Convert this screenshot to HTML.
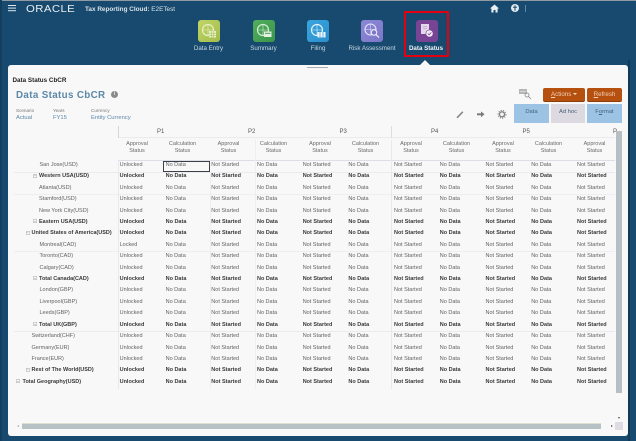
<!DOCTYPE html>
<html><head><meta charset="utf-8"><style>
html,body{margin:0;padding:0}
body{width:636px;height:441px;overflow:hidden;background:#174a6e;font-family:"Liberation Sans",sans-serif;position:relative;color:#444}
#w{position:absolute;left:0;top:0;width:636px;height:441px;filter:blur(.38px)}
.a{position:absolute;white-space:nowrap}
.tile{position:absolute;top:20px;width:22px;height:22px;border-radius:3px}
.lb{position:absolute;top:45px;font-size:6.2px;line-height:8px;color:#c9d7e2;text-align:center;width:70px;font-weight:400}
.grid{position:absolute;left:0;top:160px;width:620px}
.r{position:relative;height:11.42px;line-height:11.42px;font-size:5.5px;color:#626262;white-space:nowrap}
.r span{position:absolute;top:0}
.r span:nth-child(2){left:119.6px}.r span:nth-child(3){left:165.6px}.r span:nth-child(4){left:211.3px}.r span:nth-child(5){left:257px}.r span:nth-child(6){left:302.7px}.r span:nth-child(7){left:348.4px}.r span:nth-child(8){left:394px}.r span:nth-child(9){left:439.8px}.r span:nth-child(10){left:485.5px}.r span:nth-child(11){left:531.2px}.r span:nth-child(12){left:577px}
.r b{position:absolute;top:0;font-weight:400}
.t{color:#3a3a3a;font-weight:700}.t b{font-weight:700;color:#3a3a3a}
.t::before{content:"";position:absolute;left:var(--i);top:2.2px;width:4px;height:4px;box-sizing:border-box;box-shadow:inset 0 0 0 .7px #c2c2c2;background:linear-gradient(#c2c2c2,#c2c2c2) center/2.4px .7px no-repeat}
.hd{position:absolute;font-size:5.5px;line-height:7.3px;text-align:center;width:44px;color:#6a6a6a;top:140.6px}
.p{position:absolute;top:128px;font-size:6px;color:#555;line-height:8px}
.hl{position:absolute;height:1px;background:#eaeaef}
.vl{position:absolute;width:1px;background:#e9e9ed}
.btn{position:absolute;top:88px;height:13.5px;background:#b5500f;border-radius:2px;color:#f3d3bb;font-size:6.2px;line-height:13px;text-align:center;border-bottom:1px solid #8a3c0a;box-sizing:border-box}
.tab{position:absolute;top:104px;height:19px;font-size:5.8px;line-height:17.5px;text-align:center;color:#45617a}
</style></head><body><div id="w">
<div class="a" style="left:0;top:0;width:636px;height:1px;background:#8f9aa3"></div>
<div class="a" style="left:8px;top:5px;width:8px;height:1.4px;background:#dfe6ec;box-shadow:0 2.6px 0 #dfe6ec,0 5.2px 0 #dfe6ec"></div>
<div class="a" style="left:26px;top:3.5px;font-size:9.8px;line-height:11px;letter-spacing:.35px;color:#e9eef2;transform:scaleX(1.16);transform-origin:left">ORACLE</div>
<div class="a" style="left:85px;top:5px;font-size:6.4px;line-height:9px;color:#d9e2e9"><strong>Tax Reporting Cloud:</strong> E2ETest</div>
<svg class="a" style="left:489px;top:3px" width="40" height="11" viewBox="0 0 40 11"><path d="M1 5.5 5.5 1.5 10 5.5H8.6V9.5H6.5V7H4.5V9.5H2.4V5.5Z" fill="#e8eef2"/><circle cx="26" cy="5" r="4" fill="#e0e7ec"/><path d="M26 2.2v5.6M24 4.2h4" stroke="#174a6e" stroke-width="1"/><path d="M36.5 2v7" stroke="#7f99ad" stroke-width=".8"/></svg>

<div class="tile" style="left:198px;background:linear-gradient(135deg,#c0d667,#a3bc4a)"></div>
<svg class="a" style="left:198px;top:20px" width="22" height="22" viewBox="0 0 22 22"><circle cx="10" cy="10" r="5.5" fill="none" stroke="#e8efc8" stroke-width="1.2"/><path d="M4.5 10h11M10 4.5v11" stroke="#e8efc8" stroke-width=".6"/><rect x="11" y="11" width="7" height="6.5" fill="#e8efc8"/><path d="M11 13.2h7M11 15.3h7M13.3 11v6.5M15.6 11v6.5" stroke="#a3bc4a" stroke-width=".5"/></svg>
<div class="tile" style="left:252.5px;background:linear-gradient(135deg,#52ad5c,#3a964a)"></div>
<svg class="a" style="left:252.5px;top:20px" width="22" height="22" viewBox="0 0 22 22"><circle cx="10" cy="10" r="5.5" fill="none" stroke="#d5ecd6" stroke-width="1.2"/><path d="M4.5 10h11M10 4.5v11" stroke="#d5ecd6" stroke-width=".6"/><rect x="11" y="11.5" width="7.5" height="5.5" fill="#e3f2e3"/><path d="M12 13.3h5.5" stroke="#3a964a" stroke-width=".9"/></svg>
<div class="tile" style="left:307px;background:linear-gradient(135deg,#3aa5df,#2a8fcc)"></div>
<svg class="a" style="left:307px;top:20px" width="22" height="22" viewBox="0 0 22 22"><circle cx="10" cy="10" r="5.5" fill="none" stroke="#e2f2fb" stroke-width="1.2"/><path d="M4.5 10h11M10 4.5v11" stroke="#e2f2fb" stroke-width=".6"/><rect x="10.5" y="12" width="8" height="5.5" fill="#e8f5fc"/><path d="M13 12v5.5M16 12v5.5" stroke="#2a8fcc" stroke-width=".6"/></svg>
<div class="tile" style="left:361px;background:linear-gradient(135deg,#8d88d6,#7b76c7)"></div>
<svg class="a" style="left:361px;top:20px" width="22" height="22" viewBox="0 0 22 22"><circle cx="9.5" cy="9.5" r="5.5" fill="none" stroke="#e6e4f6" stroke-width="1.1"/><path d="M4 9.5h11M9.5 4v11" stroke="#e6e4f6" stroke-width=".5"/><circle cx="13" cy="12.5" r="2.7" fill="#7b76c7" stroke="#f2f1fb" stroke-width="1"/><path d="M15 14.6 18 17.5" stroke="#f2f1fb" stroke-width="1.2"/></svg>
<div class="tile" style="left:416px;background:#7a4496"></div>
<svg class="a" style="left:416px;top:20px" width="22" height="22" viewBox="0 0 22 22"><path d="M5 4h8v5.5l-1 4.5H5Z" fill="#e3d8ea"/><path d="M7 6.5h4M7 8.5h4" stroke="#a88abb" stroke-width=".5"/><circle cx="13.5" cy="13.5" r="3.6" fill="#f3eef6" stroke="#7a4496" stroke-width=".6"/><path d="M11.8 13.5 13.1 14.8 15.3 12.4" fill="none" stroke="#7a4496" stroke-width=".8"/></svg>
<div class="lb" style="left:173.5px">Data Entry</div>
<div class="lb" style="left:228.5px">Summary</div>
<div class="lb" style="left:283px">Filing</div>
<div class="lb" style="left:337px">Risk Assessment</div>
<div class="lb" style="left:391px;color:#f2f5f8;font-weight:700">Data Status</div>
<div class="a" style="left:404px;top:11px;width:45px;height:46px;box-sizing:border-box;border:2px solid #e4000f"></div>

<div class="a" style="left:7.5px;top:65px;width:620.5px;height:371px;background:#f8f8f8;border-radius:3px"></div>
<div class="a" style="left:420px;top:60px;width:0;height:0;border-left:5.5px solid transparent;border-right:5.5px solid transparent;border-bottom:5.5px solid #f8f8f8"></div>
<div class="a" style="left:307px;top:66.5px;width:21px;height:1px;background:#a8adb2"></div>
<div class="a" style="left:628px;top:60px;width:2px;height:381px;background:#0f3a5a"></div>
<div class="a" style="left:0;top:0;width:2px;height:441px;background:#123f60"></div>

<div class="a" style="left:12.5px;top:76.5px;font-size:6.3px;line-height:8px;font-weight:700;color:#222">Data Status CbCR</div>
<div class="a" style="left:16px;top:89px;font-size:9.8px;line-height:13px;font-weight:700;color:#5b87a8;letter-spacing:.35px">Data Status CbCR</div>
<div class="a" style="left:111px;top:91px;width:7px;height:7px;border-radius:50%;background:#8a8a8a;color:#eee;font-size:5px;line-height:7px;text-align:center;font-weight:700">i</div>
<div class="a" style="left:16px;top:107px;font-size:4.6px;line-height:7px;color:#777">Scenario</div>
<div class="a" style="left:16px;top:113.6px;font-size:5.8px;line-height:8px;color:#5b87a8">Actual</div>
<div class="a" style="left:53px;top:107px;font-size:4.6px;line-height:7px;color:#777">Years</div>
<div class="a" style="left:53px;top:113.6px;font-size:5.8px;line-height:8px;color:#5b87a8">FY15</div>
<div class="a" style="left:91px;top:107px;font-size:4.6px;line-height:7px;color:#777">Currency</div>
<div class="a" style="left:91px;top:113.6px;font-size:5.8px;line-height:8px;color:#5b87a8">Entity Currency</div>

<svg class="a" style="left:518px;top:88px" width="14" height="12" viewBox="0 0 14 12"><rect x="1" y="1" width="8" height="5" fill="#b5b5b5"/><path d="M2 3.5h6" stroke="#eee" stroke-width=".6"/><circle cx="9" cy="7" r="2" fill="none" stroke="#888" stroke-width=".8"/><path d="M10.5 8.5 13 11" stroke="#888" stroke-width=".8"/></svg>
<div class="btn" style="left:543px;width:42px"><u>A</u>ctions <span style="display:inline-block;border-left:2.2px solid transparent;border-right:2.2px solid transparent;border-top:2.4px solid #f3e3d6;vertical-align:1px"></span></div>
<div class="btn" style="left:587px;width:35px"><u>R</u>efresh</div>
<svg class="a" style="left:455px;top:108px" width="56" height="12" viewBox="0 0 56 12"><path d="M2 9.8 7.8 3.8" stroke="#858585" stroke-width="1.5"/><path d="M22 6.3h4.5" stroke="#7a7a7a" stroke-width="2"/><path d="M26 3.4 29.5 6.3 26 9.2Z" fill="#7a7a7a"/><circle cx="47" cy="6.3" r="2.5" fill="none" stroke="#7f7f7f" stroke-width="1.3"/><circle cx="47" cy="6.3" r="3.9" fill="none" stroke="#7f7f7f" stroke-width="1" stroke-dasharray="1.2 1.2"/></svg>
<div class="tab" style="left:514px;width:35px;background:#9cc3e4">Data</div>
<div class="tab" style="left:551px;width:34px;background:#dcd9e0">Ad hoc</div>
<div class="tab" style="left:587px;width:35px;background:#9cc3e4">F<u>o</u>rmat</div>

<div class="p" style="left:157px">P1</div><div class="p" style="left:248px">P2</div><div class="p" style="left:339.5px">P3</div><div class="p" style="left:431px">P4</div><div class="p" style="left:522.5px">P5</div><div class="p" style="left:613px">P</div>
<div class="hl" style="left:118px;top:137px;width:497px"></div>
<div class="vl" style="left:117.5px;top:126px;height:12px;background:#d5d5da"></div>
<div class="vl" style="left:391px;top:126px;height:12px;background:#ddd"></div>
<div class="hd" style="left:115px">Approval<br>Status</div><div class="hd" style="left:160.5px">Calculation<br>Status</div>
<div class="hd" style="left:206.5px">Approval<br>Status</div><div class="hd" style="left:251.5px">Calculation<br>Status</div>
<div class="hd" style="left:298px">Approval<br>Status</div><div class="hd" style="left:343.5px">Calculation<br>Status</div>
<div class="hd" style="left:389px">Approval<br>Status</div><div class="hd" style="left:434.5px">Calculation<br>Status</div>
<div class="hd" style="left:481px">Approval<br>Status</div><div class="hd" style="left:526.5px">Calculation<br>Status</div>
<div class="hd" style="left:572.5px">Approval<br>Status</div>
<div class="hl" style="left:118px;top:159.5px;width:497px;background:#dedee8"></div>
<div class="hl" style="left:14px;top:171.5px;width:601px"></div>
<div class="hl" style="left:14px;top:194px;width:601px;background:#eeeef2"></div>
<div class="hl" style="left:14px;top:251px;width:601px;background:#eeeef2"></div>
<div class="hl" style="left:14px;top:331px;width:601px"></div>
<div class="vl" style="left:117.5px;top:160px;height:229px"></div>
<div class="vl" style="left:209.5px;top:172px;height:217px;background:#eeeef0"></div>
<div class="vl" style="left:254.5px;top:140px;height:249px;background:#eeeef0"></div>
<div class="vl" style="left:391px;top:140px;height:249px"></div>
<div class="a" style="left:163px;top:160.5px;width:46.5px;height:11.5px;box-sizing:border-box;border:1px solid #3c4146"></div>

<div class="grid">
<div class="r"><b style="left:39.5px">San Jose(USD)</b><span>Unlocked</span><span>No Data</span><span>Not Started</span><span>No Data</span><span>Not Started</span><span>No Data</span><span>Not Started</span><span>No Data</span><span>Not Started</span><span>No Data</span><span>Not Started</span></div>
<div class="r t" style="--i:33px"><b style="left:39px">Western USA(USD)</b><span>Unlocked</span><span>No Data</span><span>Not Started</span><span>No Data</span><span>Not Started</span><span>No Data</span><span>Not Started</span><span>No Data</span><span>Not Started</span><span>No Data</span><span>Not Started</span></div>
<div class="r"><b style="left:39px">Atlanta(USD)</b><span>Unlocked</span><span>No Data</span><span>Not Started</span><span>No Data</span><span>Not Started</span><span>No Data</span><span>Not Started</span><span>No Data</span><span>Not Started</span><span>No Data</span><span>Not Started</span></div>
<div class="r"><b style="left:39px">Stamford(USD)</b><span>Unlocked</span><span>No Data</span><span>Not Started</span><span>No Data</span><span>Not Started</span><span>No Data</span><span>Not Started</span><span>No Data</span><span>Not Started</span><span>No Data</span><span>Not Started</span></div>
<div class="r"><b style="left:39px">New York City(USD)</b><span>Unlocked</span><span>No Data</span><span>Not Started</span><span>No Data</span><span>Not Started</span><span>No Data</span><span>Not Started</span><span>No Data</span><span>Not Started</span><span>No Data</span><span>Not Started</span></div>
<div class="r t" style="--i:33px"><b style="left:39px">Eastern USA(USD)</b><span>Unlocked</span><span>No Data</span><span>Not Started</span><span>No Data</span><span>Not Started</span><span>No Data</span><span>Not Started</span><span>No Data</span><span>Not Started</span><span>No Data</span><span>Not Started</span></div>
<div class="r t" style="--i:25.5px"><b style="left:31.5px">United States of America(USD)</b><span>Unlocked</span><span>No Data</span><span>Not Started</span><span>No Data</span><span>Not Started</span><span>No Data</span><span>Not Started</span><span>No Data</span><span>Not Started</span><span>No Data</span><span>Not Started</span></div>
<div class="r"><b style="left:39.5px">Montreal(CAD)</b><span>Locked</span><span>No Data</span><span>Not Started</span><span>No Data</span><span>Not Started</span><span>No Data</span><span>Not Started</span><span>No Data</span><span>Not Started</span><span>No Data</span><span>Not Started</span></div>
<div class="r"><b style="left:39.5px">Toronto(CAD)</b><span>Unlocked</span><span>No Data</span><span>Not Started</span><span>No Data</span><span>Not Started</span><span>No Data</span><span>Not Started</span><span>No Data</span><span>Not Started</span><span>No Data</span><span>Not Started</span></div>
<div class="r"><b style="left:39.5px">Calgary(CAD)</b><span>Unlocked</span><span>No Data</span><span>Not Started</span><span>No Data</span><span>Not Started</span><span>No Data</span><span>Not Started</span><span>No Data</span><span>Not Started</span><span>No Data</span><span>Not Started</span></div>
<div class="r t" style="--i:33px"><b style="left:39px">Total Canada(CAD)</b><span>Unlocked</span><span>No Data</span><span>Not Started</span><span>No Data</span><span>Not Started</span><span>No Data</span><span>Not Started</span><span>No Data</span><span>Not Started</span><span>No Data</span><span>Not Started</span></div>
<div class="r"><b style="left:39.5px">London(GBP)</b><span>Unlocked</span><span>No Data</span><span>Not Started</span><span>No Data</span><span>Not Started</span><span>No Data</span><span>Not Started</span><span>No Data</span><span>Not Started</span><span>No Data</span><span>Not Started</span></div>
<div class="r"><b style="left:39.5px">Liverpool(GBP)</b><span>Unlocked</span><span>No Data</span><span>Not Started</span><span>No Data</span><span>Not Started</span><span>No Data</span><span>Not Started</span><span>No Data</span><span>Not Started</span><span>No Data</span><span>Not Started</span></div>
<div class="r"><b style="left:39.5px">Leeds(GBP)</b><span>Unlocked</span><span>No Data</span><span>Not Started</span><span>No Data</span><span>Not Started</span><span>No Data</span><span>Not Started</span><span>No Data</span><span>Not Started</span><span>No Data</span><span>Not Started</span></div>
<div class="r t" style="--i:33px"><b style="left:39px">Total UK(GBP)</b><span>Unlocked</span><span>No Data</span><span>Not Started</span><span>No Data</span><span>Not Started</span><span>No Data</span><span>Not Started</span><span>No Data</span><span>Not Started</span><span>No Data</span><span>Not Started</span></div>
<div class="r"><b style="left:31.5px">Switzerland(CHF)</b><span>Unlocked</span><span>No Data</span><span>Not Started</span><span>No Data</span><span>Not Started</span><span>No Data</span><span>Not Started</span><span>No Data</span><span>Not Started</span><span>No Data</span><span>Not Started</span></div>
<div class="r"><b style="left:31.5px">Germany(EUR)</b><span>Unlocked</span><span>No Data</span><span>Not Started</span><span>No Data</span><span>Not Started</span><span>No Data</span><span>Not Started</span><span>No Data</span><span>Not Started</span><span>No Data</span><span>Not Started</span></div>
<div class="r"><b style="left:31.5px">France(EUR)</b><span>Unlocked</span><span>No Data</span><span>Not Started</span><span>No Data</span><span>Not Started</span><span>No Data</span><span>Not Started</span><span>No Data</span><span>Not Started</span><span>No Data</span><span>Not Started</span></div>
<div class="r t" style="--i:25.5px"><b style="left:31.5px">Rest of The World(USD)</b><span>Unlocked</span><span>No Data</span><span>Not Started</span><span>No Data</span><span>Not Started</span><span>No Data</span><span>Not Started</span><span>No Data</span><span>Not Started</span><span>No Data</span><span>Not Started</span></div>
<div class="r t" style="--i:16px"><b style="left:22.5px">Total Geography(USD)</b><span>Unlocked</span><span>No Data</span><span>Not Started</span><span>No Data</span><span>Not Started</span><span>No Data</span><span>Not Started</span><span>No Data</span><span>Not Started</span><span>No Data</span><span>Not Started</span></div>
</div>

<div class="a" style="left:616px;top:131px;width:6px;height:262px;background:#b7bfc4"></div>
<div class="a" style="left:22px;top:423px;width:579px;height:6px;background:#b7c2c6;border-top:1px solid #dedfd0;box-sizing:border-box"></div>
<div class="a" style="left:17px;top:424.5px;width:0;height:0;border-top:1.5px solid transparent;border-bottom:1.5px solid transparent;border-right:2px solid #aaa"></div>
<div class="a" style="left:611px;top:424.5px;width:0;height:0;border-top:1.5px solid transparent;border-bottom:1.5px solid transparent;border-left:2px solid #555"></div>
<div class="a" style="left:617.5px;top:416.5px;width:0;height:0;border-left:1.5px solid transparent;border-right:1.5px solid transparent;border-top:2px solid #555"></div>
<div class="a" style="left:614.5px;top:422px;width:8px;height:8px;background:#dfdbe4"></div>
</div></body></html>
